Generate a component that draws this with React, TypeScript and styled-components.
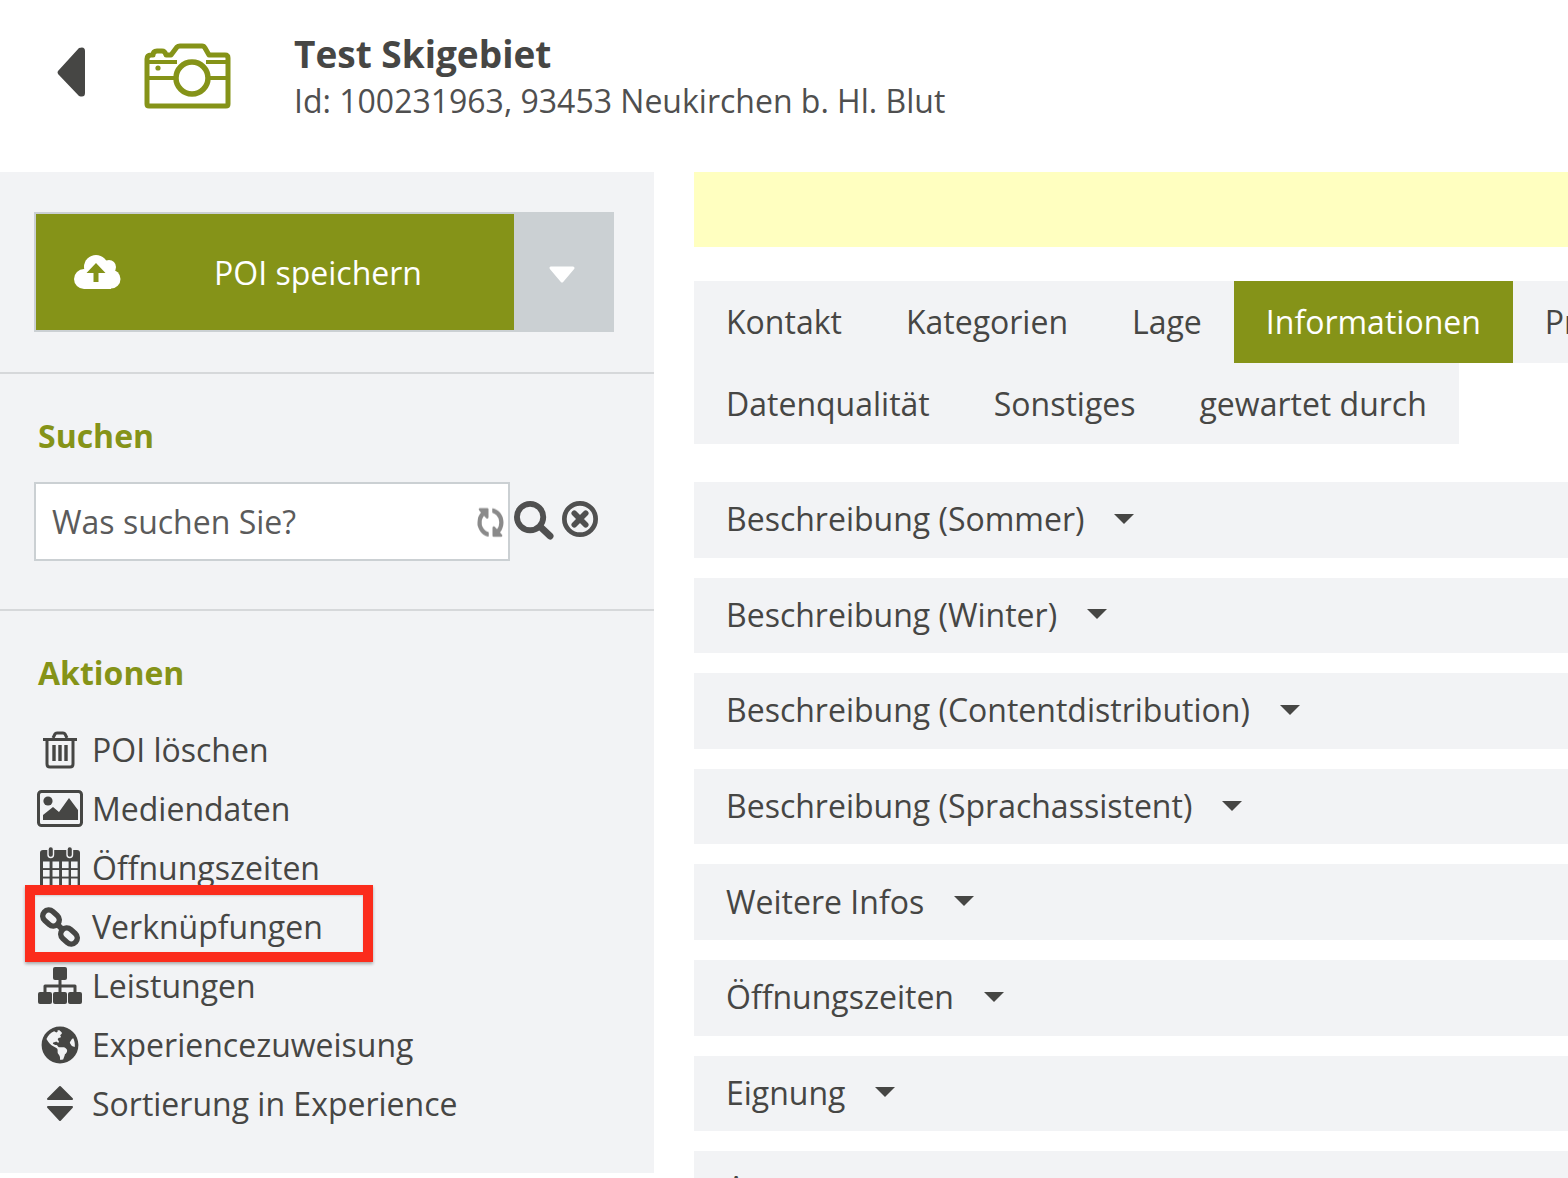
import React from "react";
import styled, { createGlobalStyle } from "styled-components";
import { FaGlobeAmericas, FaSyncAlt } from "react-icons/fa";

const Global = createGlobalStyle`
  html, body { margin: 0; padding: 0; background: #fff; height: 1178px; overflow: hidden; }
  * { box-sizing: border-box; }
  body { font-family: "Open Sans", "Liberation Sans", sans-serif; color: #464644; }
`;
const INK = "#464644";
const GREEN = "#859318";
const PANEL = "#f2f3f5";

const Page = styled.div`width: 1568px; height: 1178px; overflow: hidden; position: relative;`;
const Header = styled.header`height: 172px; display: flex; align-items: flex-start;`;
const Back = styled.svg`width: 30px; height: 52px; margin: 46px 0 0 56px; flex: none;`;
const Camera = styled.svg`width: 88px; height: 66px; margin: 43px 0 0 58px; flex: none;`;
const TitleBox = styled.div`margin: 30px 0 0 62px;`;
const Title = styled.h1`margin: 0; font-size: 37px; line-height: 48px; font-weight: 700; color: ${INK};`;
const Sub = styled.div`font-size: 32px; line-height: 46px; color: #4f4f4f;`;
const Body = styled.div`display: flex; height: 1006px;`;
const Side = styled.aside`width: 654px; height: 1001px; background: ${PANEL}; flex: none;`;
const Section = styled.section<{ $h: number; $top: number; $line?: boolean }>`
  height: ${(p) => p.$h}px; padding: ${(p) => p.$top}px 40px 0 34px;
  border-bottom: ${(p) => (p.$line ? "2px solid #d6d8da" : "none")};
`;
const SaveWrap = styled.div`display: flex; height: 120px; width: 580px; background: #cbd0d3; padding: 2px 0 2px 2px;`;
const Save = styled.div`
  width: 478px; background: ${GREEN}; color: #fff; display: flex; align-items: center; position: relative;
  justify-content: center; font-size: 32px; padding-left: 86px;
`;
const CloudIcon = styled.svg`position: absolute; left: 38px; top: 41px; width: 47px; height: 34px;`;
const Caret = styled.svg`width: 28px; height: 18px; margin: 52px 0 0 34px; flex: none;`;
const Heading = styled.h2`margin: 0; padding-left: 4px; font-size: 32px; line-height: 44px; font-weight: 700; color: ${GREEN};`;
const SearchRow = styled.div`display: flex; align-items: flex-start; margin-top: 24px;`;
const InputBox = styled.div`
  width: 476px; height: 79px; background: #fff; border: 2px solid #cbd0d3; display: flex; align-items: center;
  justify-content: space-between; padding: 0 4px 0 16px; font-size: 32px; color: #5b5b5b;
  svg { color: #8a8a8a; margin-top: 2px; transform: rotate(90deg) scaleX(1.1); filter: blur(0.7px); }
`;
const SearchIcons = styled.div`display: flex; align-items: flex-start; gap: 8px; margin: 19px 0 0 3px;`;
const List = styled.ul`list-style: none; margin: 25px 0 0; padding: 0;`;
const Item = styled.li`display: flex; align-items: center; height: 59px; font-size: 32px; white-space: nowrap;`;
const IconCell = styled.span`width: 52px; margin-right: 6px; display: flex; justify-content: center; flex: none; color: ${INK};`;
const Main = styled.main`margin-left: 40px; flex: 1; min-width: 0; overflow: hidden;`;
const Notice = styled.div`height: 75px; background: #ffffc0;`;
const Tabs = styled.nav`margin-top: 34px; width: 1000px;`;
const TabRow = styled.div<{ $h: number; $inset?: number }>`
  display: flex; height: ${(p) => p.$h}px; width: fit-content; background: ${PANEL}; padding-top: ${(p) => p.$inset ?? 0}px;
`;
const Tab = styled.div<{ $active?: boolean }>`
  padding: 0 32px 2px; font-size: 32px; display: flex; align-items: center; white-space: nowrap;
  background: ${(p) => (p.$active ? GREEN : "transparent")}; color: ${(p) => (p.$active ? "#fff" : INK)};
`;
const Accordion = styled.div`margin-top: 38px; display: flex; flex-direction: column; gap: 20px;`;
const Row = styled.div`
  height: 75.6px; background: ${PANEL}; padding: 0 0 2px 32px; display: flex; align-items: center; font-size: 32px; gap: 30px; flex: none;
  &::after { content: ""; border: 10px solid transparent; border-top: 10px solid ${INK}; border-bottom: 0; }
`;
const Mark = styled.div`
  position: absolute; left: 25px; top: 885px; width: 348px; height: 77px; border: 10px solid #fb2c1c;
  box-shadow: 0 2px 3px rgba(0,0,0,.3), inset 0 1px 2px rgba(0,0,0,.15);
`;

const TrashIcon = () => (
  <svg width="36" height="38" viewBox="0 0 36 38" fill="none" stroke={INK} strokeWidth="3">
    <path d="M1 8.5 H35" strokeWidth="3" />
    <path d="M11 7 L13 3 Q13.5 2 15 2 H21 Q22.5 2 23 3 L25 7" />
    <path d="M5 9 V33 Q5 36 8 36 H28 Q31 36 31 33 V9" />
    <path d="M12 14 V30 M18 14 V30 M24 14 V30" strokeWidth="3.4" />
  </svg>
);
const ImageIcon = () => (
  <svg width="46" height="37" viewBox="0 0 46 37">
    <rect x="1.5" y="1.5" width="43" height="34" rx="3" fill="none" stroke={INK} strokeWidth="3" />
    <circle cx="11" cy="11" r="4.6" fill={INK} />
    <path d="M6 30 V25 L16 17 L22 22 L32 8 L41 20 V30Z" fill={INK} />
  </svg>
);
const CalendarIcon = () => (
  <svg width="40" height="43" viewBox="0 0 40 43">
    <path d="M3 4 H37 Q40 4 40 7 V40 Q40 43 37 43 H3 Q0 43 0 40 V7 Q0 4 3 4Z" fill={INK} />
    <rect x="8" y="0.5" width="5.5" height="11" rx="2.7" fill={INK} stroke={PANEL} strokeWidth="1.4" />
    <rect x="27" y="0.5" width="5.5" height="11" rx="2.7" fill={INK} stroke={PANEL} strokeWidth="1.4" />
    {[3, 12.5, 22, 31].map((x) =>
      [15.5, 24, 32.5].map((y) => <rect key={`${x}-${y}`} x={x} y={y} width="6.6" height="6.6" fill={PANEL} />),
    )}
  </svg>
);
const LinkIcon = () => (
  <svg width="40" height="40" viewBox="0 0 40 40" fill="none" stroke={INK} strokeWidth="5.5">
    <rect x="2" y="5" width="18" height="12" rx="6" transform="rotate(42 11 11)" />
    <rect x="20" y="23" width="18" height="12" rx="6" transform="rotate(42 29 29)" />
    <path d="M17 17 L23 23" />
  </svg>
);
const SitemapIcon = () => (
  <svg width="44" height="37" viewBox="0 0 44 37" fill={INK}>
    <rect x="15" y="0" width="14" height="13" rx="2" />
    <rect x="0" y="25" width="14" height="12" rx="2" />
    <rect x="15" y="25" width="14" height="12" rx="2" />
    <rect x="30" y="25" width="14" height="12" rx="2" />
    <path d="M20.5 13 H23.5 V17.5 H37 Q38.5 17.5 38.5 19 V25 H35.5 V20.5 H23.5 V25 H20.5 V20.5 H8.5 V25 H5.5 V19 Q5.5 17.5 7 17.5 H20.5Z" />
  </svg>
);
const SortIcon = () => (
  <svg width="28" height="37" viewBox="0 0 28 37" fill={INK} stroke={INK} strokeWidth="2" strokeLinejoin="round">
    <path d="M14 2 L26 14 H2Z" />
    <path d="M2 22 H26 L14 35Z" />
  </svg>
);
const SearchGlyph = () => (
  <svg width="41" height="39" viewBox="0 0 41 40" fill="none" stroke="#505050">
    <circle cx="17" cy="16.5" r="13.5" strokeWidth="6" />
    <path d="M28 27 L37.5 36" strokeWidth="7" strokeLinecap="round" />
  </svg>
);
const ClearGlyph = () => (
  <svg width="36" height="36" viewBox="0 0 38 38" fill="none" stroke="#505050">
    <circle cx="19" cy="19" r="16.5" strokeWidth="5" />
    <path d="M13 13 L25 25 M25 13 L13 25" strokeWidth="6" strokeLinecap="round" />
  </svg>
);

const actions: [React.ReactNode, string][] = [
  [<TrashIcon />, "POI löschen"],
  [<ImageIcon />, "Mediendaten"],
  [<CalendarIcon />, "Öffnungszeiten"],
  [<LinkIcon />, "Verknüpfungen"],
  [<SitemapIcon />, "Leistungen"],
  [<FaGlobeAmericas size={38} />, "Experiencezuweisung"],
  [<SortIcon />, "Sortierung in Experience"],
];
const rows = ["Beschreibung (Sommer)", "Beschreibung (Winter)", "Beschreibung (Contentdistribution)", "Beschreibung (Sprachassistent)", "Weitere Infos", "Öffnungszeiten", "Eignung", "Ausstattung"];

export default function App() {
  return (
    <Page>
      <Global />
      <Header>
        <Back viewBox="0 0 30 52"><path d="M23 2 L2 25 Q1 26 2 28 L23 50 Q29 52 29 47 L29 5 Q29 0 23 2Z" fill={INK} /></Back>
        <Camera viewBox="0 0 88 66" fill="none" stroke={GREEN} strokeWidth="5" strokeLinejoin="round">
          <path d="M3 16 Q3 12 7 12 H9 Q9 8 13 8 H18 Q21 8 22 12 H27 L33 4 Q34 3 36 3 H58 Q60 3 61 5 L65 12 H81 Q84 12 84 15 V61 Q84 63 82 63 H5 Q3 63 3 61Z" />
          <path d="M3 19 H33 M62 19 H84 M3 35 H31 M65 35 H84" strokeWidth="4" />
          <circle cx="48" cy="35" r="16" strokeWidth="5.5" />
          <circle cx="14" cy="25" r="2.6" fill={GREEN} stroke="none" />
        </Camera>
        <TitleBox>
          <Title>Test Skigebiet</Title>
          <Sub>Id: 100231963, 93453 Neukirchen b. Hl. Blut</Sub>
        </TitleBox>
      </Header>
      <Body>
        <Side>
          <Section $h={202} $top={40} $line>
            <SaveWrap>
              <Save>
                <CloudIcon viewBox="0 0 47 34">
                  <g fill="#fff">
                    <circle cx="10" cy="24" r="10" /><circle cx="22" cy="12" r="12" />
                    <circle cx="35" cy="12" r="7" /><circle cx="37" cy="24" r="9.5" />
                    <rect x="10" y="16" width="27" height="18" />
                  </g>
                  <path d="M22 8 L12.5 18 H19.5 V27 H24.5 V18 H31.5Z" fill={GREEN} />
                </CloudIcon>
                POI speichern
              </Save>
              <Caret viewBox="0 0 28 18"><path d="M3 2 H25 L14 15Z" fill="#fff" stroke="#fff" strokeWidth="3" strokeLinejoin="round" /></Caret>
            </SaveWrap>
          </Section>
          <Section $h={237} $top={40} $line>
            <Heading>Suchen</Heading>
            <SearchRow>
              <InputBox>Was suchen Sie?<FaSyncAlt size={27} /></InputBox>
              <SearchIcons><SearchGlyph /><ClearGlyph /></SearchIcons>
            </SearchRow>
          </Section>
          <Section $h={560} $top={40}>
            <Heading>Aktionen</Heading>
            <List>
              {actions.map(([icon, label]) => (
                <Item key={label}><IconCell>{icon}</IconCell>{label}</Item>
              ))}
            </List>
          </Section>
        </Side>
        <Main>
          <Notice />
          <Tabs>
            <TabRow $h={82}>
              <Tab>Kontakt</Tab><Tab>Kategorien</Tab><Tab>Lage</Tab><Tab $active>Informationen</Tab><Tab>Preise</Tab>
            </TabRow>
            <TabRow $h={81} $inset={2}>
              <Tab>Datenqualität</Tab><Tab>Sonstiges</Tab><Tab>gewartet durch</Tab>
            </TabRow>
          </Tabs>
          <Accordion>{rows.map((r) => <Row key={r}>{r}</Row>)}</Accordion>
        </Main>
      </Body>
      <Mark />
    </Page>
  );
}
